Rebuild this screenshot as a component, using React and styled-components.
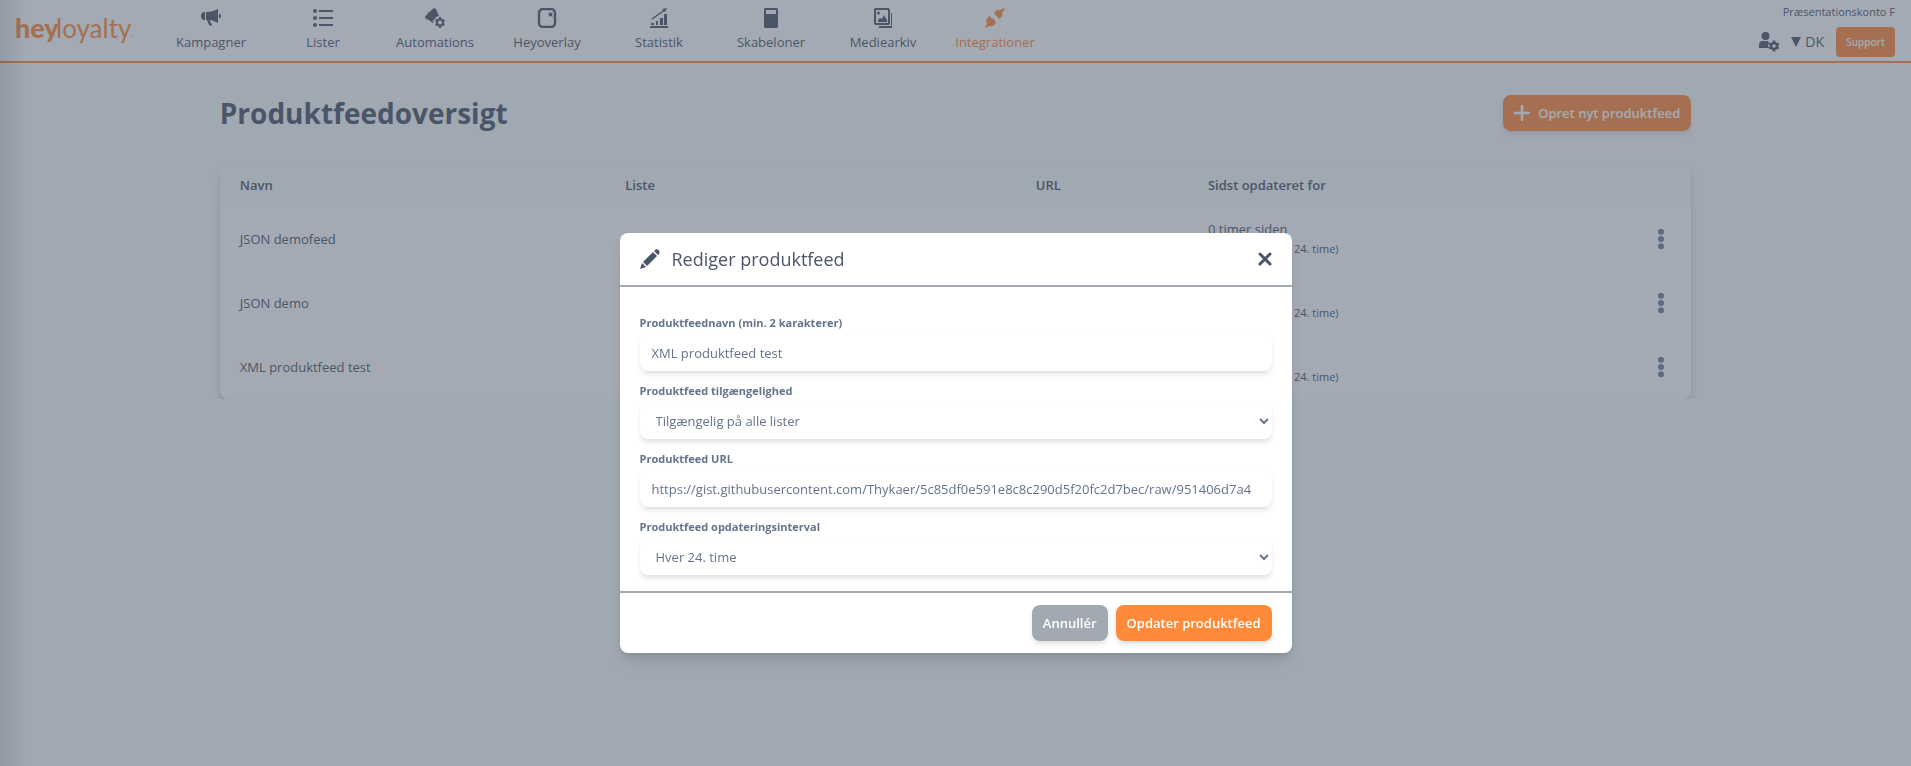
import styled, { createGlobalStyle } from 'styled-components';

const GlobalStyle = createGlobalStyle`
  * {
    box-sizing: border-box;
  }

  body {
    margin: 0;
    background-color: #f7fafc;
    color: #4a5568;
    font-family: 'Open Sans', 'Noto Sans', sans-serif;
    font-size: 13px;
    line-height: 20px;
  }

  button,
  input,
  select {
    font: inherit;
    color: inherit;
    border: 0;
  }
`;

const StyledHeader = styled.header`
  display: flex;
  justify-content: space-between;
  height: 63px;
  padding: 0 16px 0 15px;
  background-color: #fff;
  border-bottom: 2px solid #ff8b3a;
`;

const StyledBrand = styled.a`
  width: 140px;
  padding-top: 12px;
`;

const StyledNav = styled.nav`
  display: flex;
  flex: 1;
`;

const StyledNavLink = styled.a`
  display: flex;
  flex-direction: column;
  align-items: center;
  gap: 4px;
  width: 112px;
  padding-top: 8px;
  color: ${({ $active }) => ($active ? '#ff8b3a' : '#4a5568')};
  text-decoration: none;
`;

const StyledAccount = styled.div`
  display: flex;
  flex-direction: column;
  align-items: flex-end;
  gap: 5px;
  padding-top: 2px;
`;

const StyledAccountName = styled.span`
  font-size: 11px;
`;

const StyledTools = styled.div`
  display: flex;
  align-items: center;
  gap: 12px;
`;

const StyledLanguage = styled.button`
  display: flex;
  align-items: center;
  gap: 4px;
  padding: 0;
  background: none;
  font-size: 14px;
`;

const StyledSupport = styled.button`
  height: 30px;
  width: 59px;
  padding: 0;
  border-radius: 4px;
  background-color: #ff8b3a;
  color: #fff;
  font-size: 10px;
  font-weight: 600;
`;

const StyledMain = styled.main`
  width: 77%;
  margin: 0 auto;
  padding-top: 32px;
`;

const StyledTitleRow = styled.div`
  display: flex;
  justify-content: space-between;
  align-items: center;
  margin-bottom: 32px;

  h1 {
    margin: 0;
    font-size: 28px;
    line-height: 36px;
  }
`;

const StyledButton = styled.button`
  display: flex;
  align-items: center;
  gap: 8px;
  height: 36px;
  padding: 0 11px;
  border-radius: 8px;
  background-color: ${({ $muted }) => ($muted ? '#a3a9b3' : '#ff8b3a')};
  color: #fff;
  font-weight: 600;
  box-shadow: 0 4px 6px -1px rgba(0, 0, 0, 0.1), 0 2px 4px -1px rgba(0, 0, 0, 0.06);
`;

const StyledTable = styled.table`
  width: 100%;
  table-layout: fixed;
  border-collapse: separate;
  border-spacing: 0;
  border-radius: 8px;
  background-color: #fff;
  box-shadow: 0 10px 15px -3px rgba(0, 0, 0, 0.15), 0 4px 6px -2px rgba(0, 0, 0, 0.15);

  th,
  td {
    padding: 0 20px;
    text-align: left;
  }

  th {
    height: 44px;
    background-color: #f7fafc;
    font-weight: 600;
  }

  th:first-child {
    border-top-left-radius: 8px;
  }

  th:last-child {
    border-top-right-radius: 8px;
  }

  td {
    height: 64px;
  }

  td:last-child {
    text-align: right;
  }
`;

const StyledCol = styled.col`
  width: ${({ $share }) => $share}%;
`;

const StyledInterval = styled.div`
  font-size: 11px;
`;

const StyledIconButton = styled.button`
  display: inline-flex;
  padding: 0;
  background: none;
  vertical-align: middle;
`;

const StyledDots = styled(StyledIconButton)`
  color: #718096;
`;

const StyledBackdrop = styled.div`
  display: flex;
  justify-content: center;
  align-items: flex-start;
  position: fixed;
  inset: 0;
  padding-top: 233px;
  background-color: rgba(74, 85, 104, 0.5);
  z-index: 10;
`;

const StyledDrawerShadow = styled.div`
  position: fixed;
  top: 0;
  bottom: 0;
  left: 0;
  width: 28px;
  background: linear-gradient(to right, rgba(0, 0, 0, 0.13), rgba(0, 0, 0, 0));
`;

const StyledModal = styled.form`
  width: 672px;
  border-radius: 8px;
  background-color: #fff;
  box-shadow: 0 10px 15px -3px rgba(0, 0, 0, 0.1), 0 4px 6px -2px rgba(0, 0, 0, 0.1);
`;

const StyledModalHeader = styled.div`
  display: flex;
  align-items: center;
  gap: 12px;
  height: 54px;
  padding: 0 20px;
  border-bottom: 2px solid #a3a9b3;

  h2 {
    flex: 1;
    margin: 0;
    font-size: 18px;
    font-weight: 400;
  }
`;

const StyledModalBody = styled.div`
  display: flex;
  flex-direction: column;
  gap: 8px;
  padding: 24px 20px 16px;
  color: #64748b;
`;

const StyledModalFooter = styled.div`
  display: flex;
  justify-content: flex-end;
  gap: 8px;
  padding: 12px 20px;
  border-top: 2px solid #a3a9b3;
`;

const StyledField = styled.div`
  display: flex;
  flex-direction: column;

  label {
    font-size: 11px;
    font-weight: 700;
    line-height: 24px;
  }

  input,
  select {
    height: 36px;
    width: 100%;
    border-radius: 8px;
    background-color: #fff;
    box-shadow: 0 4px 6px -1px rgba(0, 0, 0, 0.1), 0 2px 4px -1px rgba(0, 0, 0, 0.06);
  }

  input {
    padding: 0 12px;
  }

  select {
    padding: 0 0 0 12px;
  }
`;

const CampaignIcon = () => (
  <svg width='20' height='20' viewBox='0 0 20 20' fill='currentColor'>
    <path d='M4 4v8H3c-4 0-4-8 0-8z' />
    <path d='M5 4c5 0 8-1 12-3v14c-4-2-6-3-8-3v1l2 4-1 1-2-1-2-5H5z' />
    <path d='M18 6c3 0 3 4 0 4z' />
  </svg>
);

const ListIcon = () => (
  <svg width='20' height='20' viewBox='0 0 20 20' fill='currentColor'>
    <circle cx='2' cy='3' r='2' />
    <circle cx='2' cy='10' r='2' />
    <circle cx='2' cy='17' r='2' />
    <path d='M6 2h14v2H6zM6 9h14v2H6zM6 16h14v2H6z' />
  </svg>
);

const AutomationIcon = () => (
  <svg width='20' height='20' viewBox='0 0 20 20' fill='currentColor'>
    <path d='M9 0l2 1 3 7-3 1-2 3-2 1 2 1-1 1-3-2-1-1-3-1-1-2 3-4z' />
    <circle cx='15' cy='14.500' r='3' fill='none' stroke='currentColor' strokeWidth='2' />
    <path
      d='M15 9v2M15 18v2M10.500 12l2 1M17.500 16l2 1M10.500 17l2-1M17.500 13l2-1'
      stroke='currentColor'
      strokeWidth='2'
    />
  </svg>
);

const OverlayIcon = () => (
  <svg width='20' height='20' viewBox='0 0 20 20' fill='currentColor'>
    <rect x='2' y='1' width='16' height='18' rx='4' fill='none' stroke='currentColor' strokeWidth='2.400' />
    <path d='M11.500 4.500l4 4M15.500 4.500l-4 4M11.500 6.500h4M13.500 4.500v4' stroke='currentColor' />
  </svg>
);

const StatsIcon = () => (
  <svg width='20' height='20' viewBox='0 0 20 20' fill='currentColor'>
    <path d='M1 18h18v2H1zM2 15h3v2H2zM7 13h2v4H7zM11 10h3v7h-3zM15 6h3v11h-3z' />
    <path d='M3 11l7-5 6-4' fill='none' stroke='currentColor' strokeWidth='1.500' />
    <path d='M13 1l5-1-2 4z' />
  </svg>
);

const TemplateIcon = () => (
  <svg width='20' height='20' viewBox='0 0 20 20' fill='currentColor' fillRule='evenodd'>
    <path d='M4 0h12a2 2 0 0 1 1 2v16a2 2 0 0 1-1 2H4a2 2 0 0 1-1-2V2a2 2 0 0 1 1-2zM5 2v4h10V2z' />
  </svg>
);

const MediaIcon = () => (
  <svg width='20' height='20' viewBox='0 0 20 20' fill='currentColor'>
    <rect x='2' y='1' width='14' height='15' rx='1' fill='none' stroke='currentColor' strokeWidth='2' />
    <circle cx='5.500' cy='5' r='1.500' />
    <path d='M5 14v-2l2-2 2 1 2-4 3 5v2zM18 5h1v15H6v-2h12z' />
  </svg>
);

const PlugIcon = () => (
  <svg width='20' height='20' viewBox='0 0 20 20' fill='currentColor'>
    <path d='M9 5c2-4 5-3 6-3l4-2 1 1-3 4c1 2 0 4-3 6zM3 9l2-1 2 3 2-1 0 2 2 2-1 2c-2 3-5 2-6 2l-3 2-1-1 2-3c-1-2-1-5 1-7z' />
  </svg>
);

const PencilIcon = () => (
  <svg width='20' height='20' viewBox='0 0 20 20' fill='currentColor'>
    <path d='M13 3l4 4L7 17l-4-4zM2 14l4 4-6 2zM14 2l1-1c2-2 6 1 4 4l-1 1z' />
  </svg>
);

const CloseIcon = () => (
  <svg width='14' height='14' viewBox='0 0 14 14' stroke='currentColor' strokeWidth='3' strokeLinecap='round'>
    <path d='M2 2l10 10M12 2L2 12' />
  </svg>
);

const PlusIcon = () => (
  <svg width='16' height='16' viewBox='0 0 16 16' stroke='currentColor' strokeWidth='2.500' strokeLinecap='round'>
    <path d='M8 1v14M1 8h14' />
  </svg>
);

const AccountIcon = () => (
  <svg width='20' height='20' viewBox='0 0 20 20' fill='currentColor'>
    <circle cx='6.500' cy='4' r='4' />
    <path d='M4 9h5l1 2-1 2 1 3H0v-2c0-3 1-5 4-5z' />
    <circle cx='15' cy='14' r='3' fill='none' stroke='currentColor' strokeWidth='2.500' />
    <path
      d='M15 8.500v2M15 17.500v2M10 11.500l2 1M18 15.500l2 1M10 16.500l2-1M18 12.500l2-1'
      stroke='currentColor'
      strokeWidth='2.500'
    />
  </svg>
);

const DotsIcon = () => (
  <svg width='20' height='22' viewBox='0 0 20 22' fill='currentColor'>
    <circle cx='10' cy='3.700' r='3' />
    <circle cx='10' cy='11' r='3' />
    <circle cx='10' cy='18.300' r='3' />
  </svg>
);

const Logo = () => (
  <svg width='124' height='36' viewBox='0 0 124 36' fill='#ff8b3a' fontFamily='Lato, sans-serif'>
    <text x='0' y='26' fontSize='27' fontWeight='900'>
      hey
    </text>
    <text x='41' y='26' fontSize='26'>
      loyalty
    </text>
    <text x='115' y='26' fontSize='4'>
      ™
    </text>
  </svg>
);

const navItems = [
  { label: 'Kampagner', icon: <CampaignIcon /> },
  { label: 'Lister', icon: <ListIcon /> },
  { label: 'Automations', icon: <AutomationIcon /> },
  { label: 'Heyoverlay', icon: <OverlayIcon /> },
  { label: 'Statistik', icon: <StatsIcon /> },
  { label: 'Skabeloner', icon: <TemplateIcon /> },
  { label: 'Mediearkiv', icon: <MediaIcon /> },
  { label: 'Integrationer', icon: <PlugIcon />, active: true },
];

const feeds = ['JSON demofeed', 'JSON demo', 'XML produktfeed test'];

const Header = () => (
  <StyledHeader>
    <StyledBrand href='#' aria-label='heyloyalty'>
      <Logo />
    </StyledBrand>
    <StyledNav>
      {navItems.map(({ label, icon, active }) => (
        <StyledNavLink key={label} href='#' $active={active}>
          {icon}
          {label}
        </StyledNavLink>
      ))}
    </StyledNav>
    <StyledAccount>
      <StyledAccountName>Præsentationskonto F</StyledAccountName>
      <StyledTools>
        <StyledIconButton type='button' aria-label='Konto'>
          <AccountIcon />
        </StyledIconButton>
        <StyledLanguage type='button'>
          <svg width='10' height='10' viewBox='0 0 10 10' fill='currentColor'>
            <path d='M0 0h10L5 10z' />
          </svg>
          DK
        </StyledLanguage>
        <StyledSupport type='button'>Support</StyledSupport>
      </StyledTools>
    </StyledAccount>
  </StyledHeader>
);

const FeedTable = () => (
  <StyledTable>
    <colgroup>
      <StyledCol $share={26.2} />
      <StyledCol $share={27.9} />
      <StyledCol $share={11.7} />
      <StyledCol $share={24.2} />
      <StyledCol $share={10} />
    </colgroup>
    <thead>
      <tr>
        <th>Navn</th>
        <th>Liste</th>
        <th>URL</th>
        <th>Sidst opdateret for</th>
        <th />
      </tr>
    </thead>
    <tbody>
      {feeds.map((name) => (
        <tr key={name}>
          <td>{name}</td>
          <td />
          <td />
          <td>
            0 timer siden
            <StyledInterval>(Opdateres hver 24. time)</StyledInterval>
          </td>
          <td>
            <StyledDots type='button' aria-label='Handlinger'>
              <DotsIcon />
            </StyledDots>
          </td>
        </tr>
      ))}
    </tbody>
  </StyledTable>
);

const EditFeedModal = () => (
  <StyledBackdrop>
    <StyledModal onSubmit={(e) => e.preventDefault()}>
      <StyledModalHeader>
        <PencilIcon />
        <h2>Rediger produktfeed</h2>
        <StyledIconButton type='button' aria-label='Luk'>
          <CloseIcon />
        </StyledIconButton>
      </StyledModalHeader>
      <StyledModalBody>
        <StyledField>
          <label htmlFor='name'>Produktfeednavn (min. 2 karakterer)</label>
          <input id='name' type='text' defaultValue='XML produktfeed test' />
        </StyledField>
        <StyledField>
          <label htmlFor='access'>Produktfeed tilgængelighed</label>
          <select id='access'>
            <option>Tilgængelig på alle lister</option>
          </select>
        </StyledField>
        <StyledField>
          <label htmlFor='url'>Produktfeed URL</label>
          <input
            id='url'
            type='text'
            defaultValue='https://gist.githubusercontent.com/Thykaer/5c85df0e591e8c8c290d5f20fc2d7bec/raw/951406d7a4'
          />
        </StyledField>
        <StyledField>
          <label htmlFor='interval'>Produktfeed opdateringsinterval</label>
          <select id='interval'>
            <option>Hver 24. time</option>
          </select>
        </StyledField>
      </StyledModalBody>
      <StyledModalFooter>
        <StyledButton type='button' $muted>
          Annullér
        </StyledButton>
        <StyledButton type='submit'>Opdater produktfeed</StyledButton>
      </StyledModalFooter>
    </StyledModal>
  </StyledBackdrop>
);

const App = () => {
  return (
    <>
      <GlobalStyle />
      <Header />
      <StyledMain>
        <StyledTitleRow>
          <h1>Produktfeedoversigt</h1>
          <StyledButton type='button'>
            <PlusIcon />
            Opret nyt produktfeed
          </StyledButton>
        </StyledTitleRow>
        <FeedTable />
      </StyledMain>
      <StyledDrawerShadow />
      <EditFeedModal />
    </>
  );
};

export default App;
